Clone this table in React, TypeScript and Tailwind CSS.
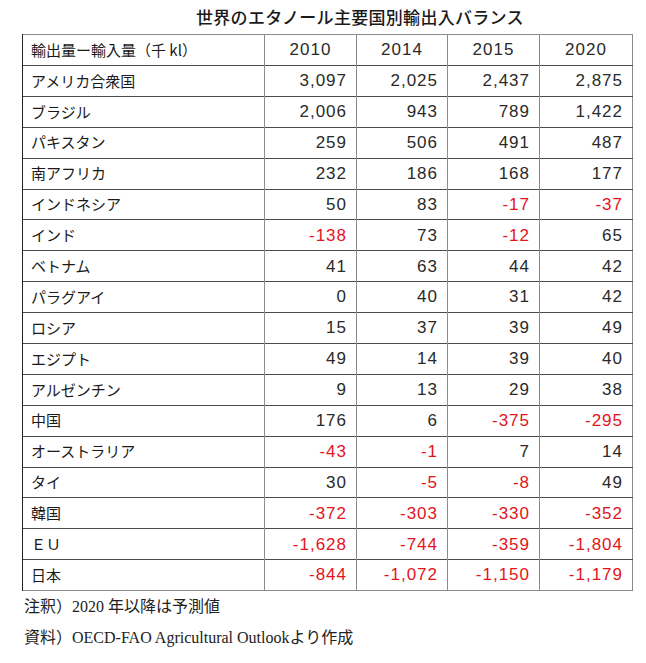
const rows: [string, string[]][] = [
  ["アメリカ合衆国", ["3,097", "2,025", "2,437", "2,875"]],
  ["ブラジル", ["2,006", "943", "789", "1,422"]],
  ["パキスタン", ["259", "506", "491", "487"]],
  ["南アフリカ", ["232", "186", "168", "177"]],
  ["インドネシア", ["50", "83", "-17", "-37"]],
  ["インド", ["-138", "73", "-12", "65"]],
  ["ベトナム", ["41", "63", "44", "42"]],
  ["パラグアイ", ["0", "40", "31", "42"]],
  ["ロシア", ["15", "37", "39", "49"]],
  ["エジプト", ["49", "14", "39", "40"]],
  ["アルゼンチン", ["9", "13", "29", "38"]],
  ["中国", ["176", "6", "-375", "-295"]],
  ["オーストラリア", ["-43", "-1", "7", "14"]],
  ["タイ", ["30", "-5", "-8", "49"]],
  ["韓国", ["-372", "-303", "-330", "-352"]],
  ["ＥＵ", ["-1,628", "-744", "-359", "-1,804"]],
  ["日本", ["-844", "-1,072", "-1,150", "-1,179"]],
]

const years = ["2010", "2014", "2015", "2020"]

const jp = "font-['Noto_Sans_CJK_JP',sans-serif]"
const num = "font-['Liberation_Sans','Noto_Sans_CJK_JP',sans-serif]"

export default function App() {
  return (
    <div className="w-[646px] h-[663px] bg-white text-[#1a1a1a] overflow-hidden">
      <h1 className={`${jp} pt-[5px] pl-[196px] text-[17px] leading-[24px] font-medium tracking-[0.3px]`}>
        世界のエタノール主要国別輸出入バランス
      </h1>

      <table className="ml-[22px] mt-[5px] w-[610px] table-fixed border-collapse border-t border-r border-[#8a8a8a]">
        <colgroup>
          <col className="w-[242px]" />
          <col className="w-[92px]" />
          <col className="w-[91px]" />
          <col className="w-[92px]" />
          <col className="w-[93px]" />
        </colgroup>
        <thead>
          <tr className="h-[31px] border-b border-[#4a4a4a]">
            <th className={`${jp} border-l border-l-[#222] pl-[8px] text-left text-[15px] font-normal`}>
              輸出量ー輸入量（千 kl）
            </th>
            {years.map((y) => (
              <th key={y} className={`${num} border-l border-[#8a8a8a] text-center text-[17px] font-normal tracking-[1px] text-[#2a2a2a]`}>
                {y}
              </th>
            ))}
          </tr>
        </thead>
        <tbody>
          {rows.map(([label, vals], i) => (
            <tr
              key={label}
              className={`h-[30.9px] border-b ${i === rows.length - 1 ? "border-[#8a8a8a]" : "border-[#4a4a4a]"}`}
            >
              <td className={`${jp} border-l border-l-[#222] pl-[8px] text-[15px]`}>{label}</td>
              {vals.map((v, j) => (
                <td
                  key={j}
                  className={`${num} border-l border-[#8a8a8a] pr-[9px] text-right text-[17px] tracking-[1px] ${
                    v.startsWith("-") ? "text-[#e3141c]" : "text-[#2a2a2a]"
                  }`}
                >
                  {v}
                </td>
              ))}
            </tr>
          ))}
        </tbody>
      </table>

      <div className="pl-[24px] font-['Liberation_Serif','Noto_Sans_CJK_JP',serif] text-[16px] leading-[31px] text-[#222]">
        <p>注釈）2020 年以降は予測値</p>
        <p>資料）OECD-FAO Agricultural Outlookより作成</p>
      </div>
    </div>
  )
}
